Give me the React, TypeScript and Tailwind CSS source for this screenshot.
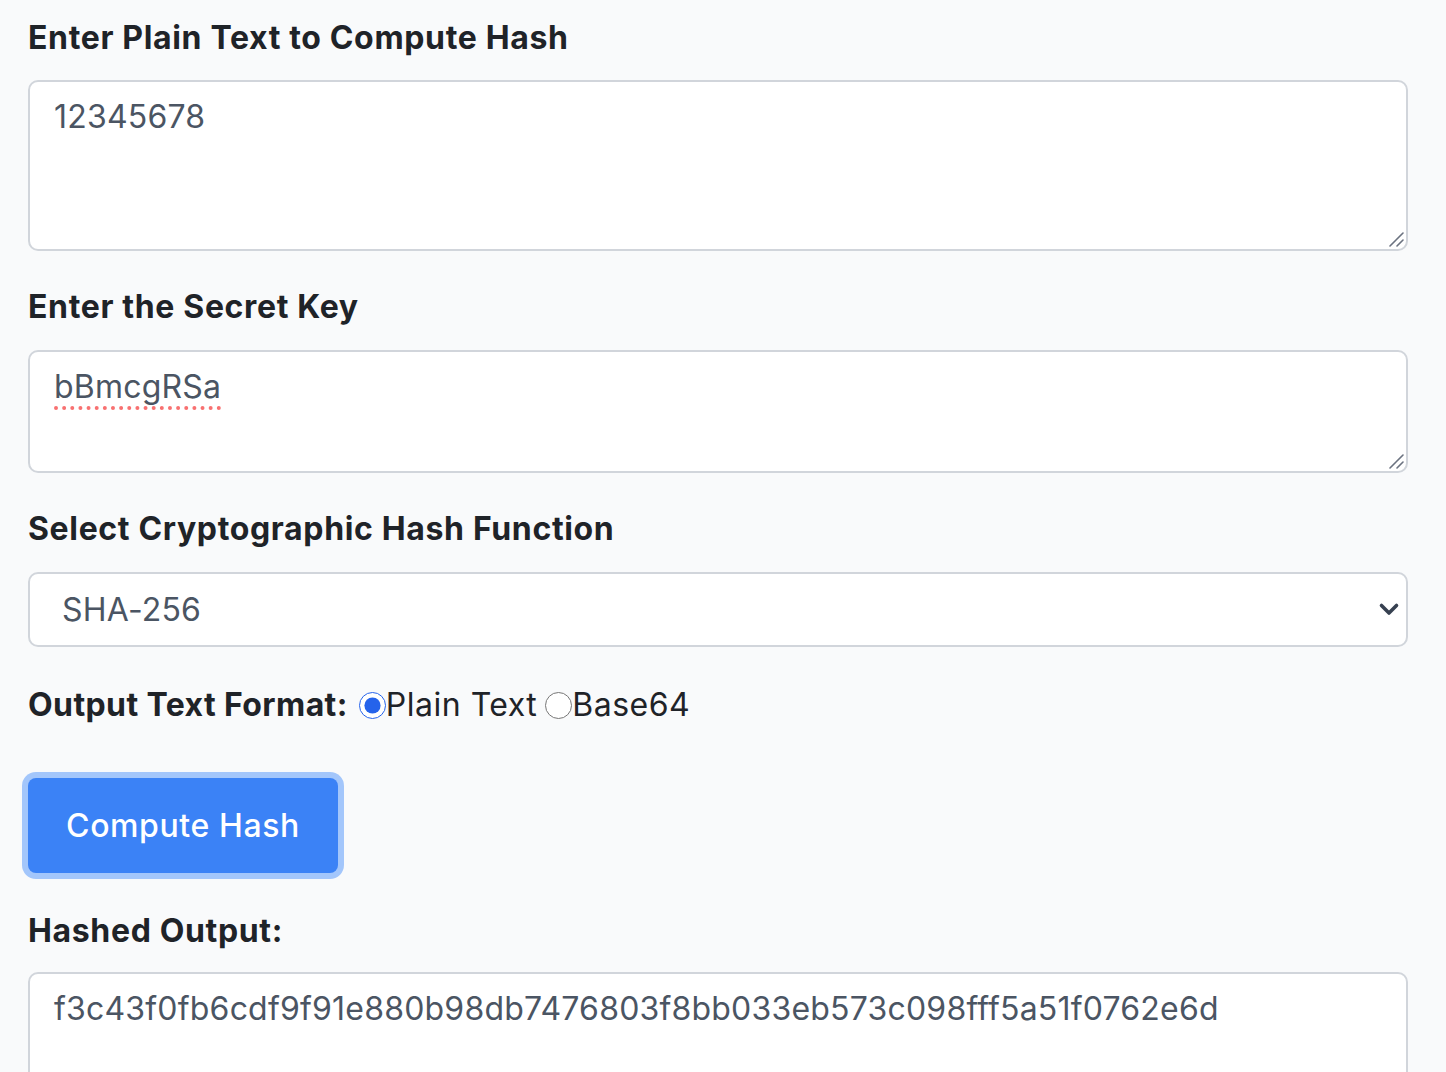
import React, { useState } from 'react';

const HASH = 'f3c43f0fb6cdf9f91e880b98db7476803f8bb033eb573c098fff5a51f0762e6d';

// big resize grip, drawn over the textarea corner
const Grip = () => (
  <svg className="absolute right-[4px] bottom-[4px] pointer-events-none" width="16" height="16" viewBox="0 0 16 16">
    <path d="M2 15L15 2M9 15L15 9" stroke="#6b7280" strokeWidth="1.6" strokeLinecap="round" />
  </svg>
);

const App: React.FC = () => {
  const [plain, setPlain] = useState('12345678');
  const [secret, setSecret] = useState('bBmcgRSa');
  const [algo, setAlgo] = useState('SHA-256');
  const [format, setFormat] = useState<'plain' | 'base64'>('plain');

  const labelCls = 'block text-[32px] leading-[48px] font-bold text-[#1f2328] tracking-[0.65px]';
  const fieldCls =
    'block w-full bg-white border-2 border-[#d1d5db] rounded-[10px] px-[24px] text-[32px] leading-[44px] text-[#4b5563] tracking-[0.2px] outline-none';

  return (
    <div className="min-h-screen bg-[#f9fafb] px-[28px] pt-[14px] pb-10 font-['Inter',sans-serif]" style={{ width: 1446 }}>
      <div className="w-[1380px]">
        <label className={labelCls}>Enter Plain Text to Compute Hash</label>
        <div className="relative mt-[18px]">
          <textarea
            value={plain}
            onChange={e => setPlain(e.target.value)}
            spellCheck={false}
            className={`${fieldCls} h-[171px] pt-[13px] resize-none`}
          />
          <Grip />
        </div>

        <label className={`${labelCls} mt-[32px]`}>Enter the Secret Key</label>
        <div className="relative mt-[19px]">
          <textarea
            value={secret}
            onChange={e => setSecret(e.target.value)}
            spellCheck={false}
            className={`${fieldCls} h-[123px] pt-[13px] resize-none underline decoration-dotted decoration-[#f87171] decoration-[4px] underline-offset-[8px] [text-decoration-skip-ink:none]`}
          />
          <Grip />
        </div>

        <label className={`${labelCls} mt-[32px]`}>Select Cryptographic Hash Function</label>
        <div className="relative mt-[19px]">
          <select
            value={algo}
            onChange={e => setAlgo(e.target.value)}
            className={`${fieldCls} h-[75px] appearance-none pl-[32px] text-[#4b5563]`}
          >
            <option>MD5</option>
            <option>SHA-1</option>
            <option>SHA-256</option>
            <option>SHA-384</option>
            <option>SHA-512</option>
          </select>
          <svg
            className="absolute right-[8px] top-[27px] pointer-events-none"
            width="22"
            height="20"
            viewBox="0 0 22 20"
            fill="none"
          >
            <path d="M3.5 6.5l7.5 7.5 7.5-7.5" stroke="#374151" strokeWidth="3.6" strokeLinecap="round" strokeLinejoin="round" />
          </svg>
        </div>

        <div className="mt-[34px] flex items-center h-[48px] text-[32px] text-[#1f2328] tracking-[0.5px]">
          <span className="font-bold tracking-[0.4px]">Output Text Format:</span>
          <label className="flex items-center ml-[11px]">
            <input
              type="radio"
              name="fmt"
              checked={format === 'plain'}
              onChange={() => setFormat('plain')}
              className="w-[27px] h-[27px] m-0 accent-[#2563eb]"
            />
            <span>Plain Text</span>
          </label>
          <label className="flex items-center ml-[8px]">
            <input
              type="radio"
              name="fmt"
              checked={format === 'base64'}
              onChange={() => setFormat('base64')}
              className="w-[27px] h-[27px] m-0 accent-[#2563eb]"
            />
            <span>Base64</span>
          </label>
        </div>

        <button className="mt-[49px] ml-0 h-[95px] w-[310px] rounded-[8px] bg-[#3b82f6] text-white text-[32px] font-medium tracking-[0.6px] ring-[6px] ring-[#a3c6fb]">
          Compute Hash
        </button>

        <label className={`${labelCls} mt-[34px]`}>Hashed Output:</label>
        <div className="relative mt-[17px]">
          <textarea
            readOnly
            value={HASH}
            spellCheck={false}
            className={`${fieldCls} h-[171px] pt-[13px] resize-none`}
          />
          <Grip />
        </div>
      </div>
    </div>
  );
};

export default App;
